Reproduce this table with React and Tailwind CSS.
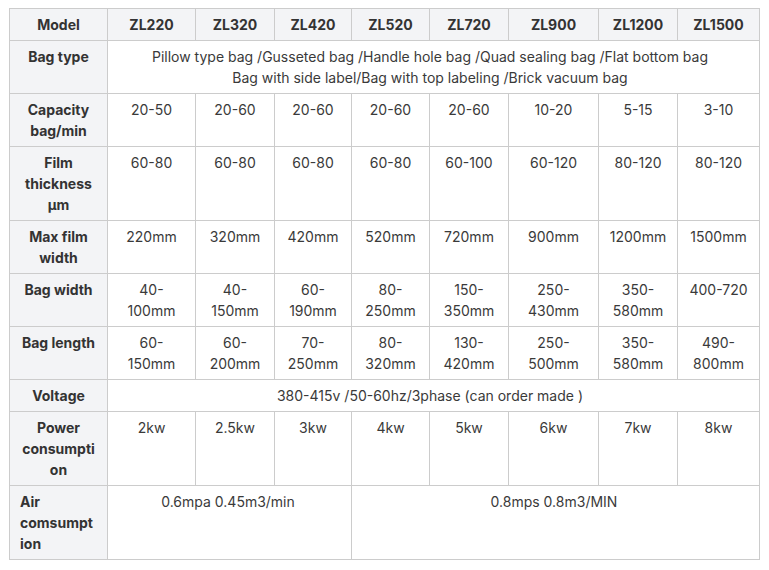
const models = ['ZL220', 'ZL320', 'ZL420', 'ZL520', 'ZL720', 'ZL900', 'ZL1200', 'ZL1500'];
const widths = [98, 88, 79, 77, 78, 79, 90, 79, 82];

const rows = [
    { label: 'Capacity bag/min', values: ['20-50', '20-60', '20-60', '20-60', '20-60', '10-20', '5-15', '3-10'] },
    { label: 'Film thickness μm', values: ['60-80', '60-80', '60-80', '60-80', '60-100', '60-120', '80-120', '80-120'] },
    { label: 'Max film width', values: ['220mm', '320mm', '420mm', '520mm', '720mm', '900mm', '1200mm', '1500mm'] },
    { label: 'Bag width', values: ['40-100mm', '40-150mm', '60-190mm', '80-250mm', '150-350mm', '250-430mm', '350-580mm', '400-720'] },
    { label: 'Bag length', values: ['60-150mm', '60-200mm', '70-250mm', '80-320mm', '130-420mm', '250-500mm', '350-580mm', '490-800mm'] },
];

const cell = 'border border-[#cccccc] py-[5px] align-top break-words';
const th = `${cell} bg-[#f3f4f6] px-[10px] text-center font-bold text-[#333333]`;
const side = `${cell} bg-[#f3f4f6] px-[11px] text-center font-bold text-[#333333]`;
const td = `${cell} bg-white px-[10px] text-center text-[#3a3a3a]`;
const wide = `${cell} bg-white pl-[8px] pr-[15px] text-center text-[#3a3a3a]`;
const half = `${cell} bg-white pl-[9px] pr-[12px] text-center text-[#3a3a3a]`;

export default function App() {
    return (
        <div className="min-h-[570px] bg-white pl-[9px] pt-[8px] font-['Inter',sans-serif] text-[14px] leading-[21px]">
            <table className="w-[750px] table-fixed border-collapse">
                <colgroup>
                    {widths.map((w, i) => (
                        <col key={i} style={{ width: w }} />
                    ))}
                </colgroup>
                <tbody>
                    <tr>
                        <th className={side}>Model</th>
                        {models.map((m) => (
                            <th key={m} className={th}>{m}</th>
                        ))}
                    </tr>
                    <tr>
                        <th className={side}>Bag type</th>
                        <td className={wide} colSpan={8}>
                            Pillow type bag /Gusseted bag /Handle hole bag /Quad sealing bag /Flat bottom bag
                            <br />
                            Bag with side label/Bag with top labeling /Brick vacuum bag
                        </td>
                    </tr>
                    {rows.map((r) => (
                        <tr key={r.label}>
                            <th className={side}>{r.label}</th>
                            {r.values.map((v, i) => (
                                <td key={i} className={td}>{v}</td>
                            ))}
                        </tr>
                    ))}
                    <tr>
                        <th className={side}>Voltage</th>
                        <td className={wide} colSpan={8}>380-415v /50-60hz/3phase (can order made )</td>
                    </tr>
                    <tr>
                        <th className={side}>Power consumption</th>
                        {['2kw', '2.5kw', '3kw', '4kw', '5kw', '6kw', '7kw', '8kw'].map((v) => (
                            <td key={v} className={td}>{v}</td>
                        ))}
                    </tr>
                    <tr>
                        <th className={`${cell} bg-[#f3f4f6] pl-[10px] pr-[14px] text-left font-bold text-[#333333]`}>Air comsumption</th>
                        <td className={half} colSpan={3}>0.6mpa 0.45m3/min</td>
                        <td className={half} colSpan={5}>0.8mps 0.8m3/MIN</td>
                    </tr>
                </tbody>
            </table>
        </div>
    );
}
